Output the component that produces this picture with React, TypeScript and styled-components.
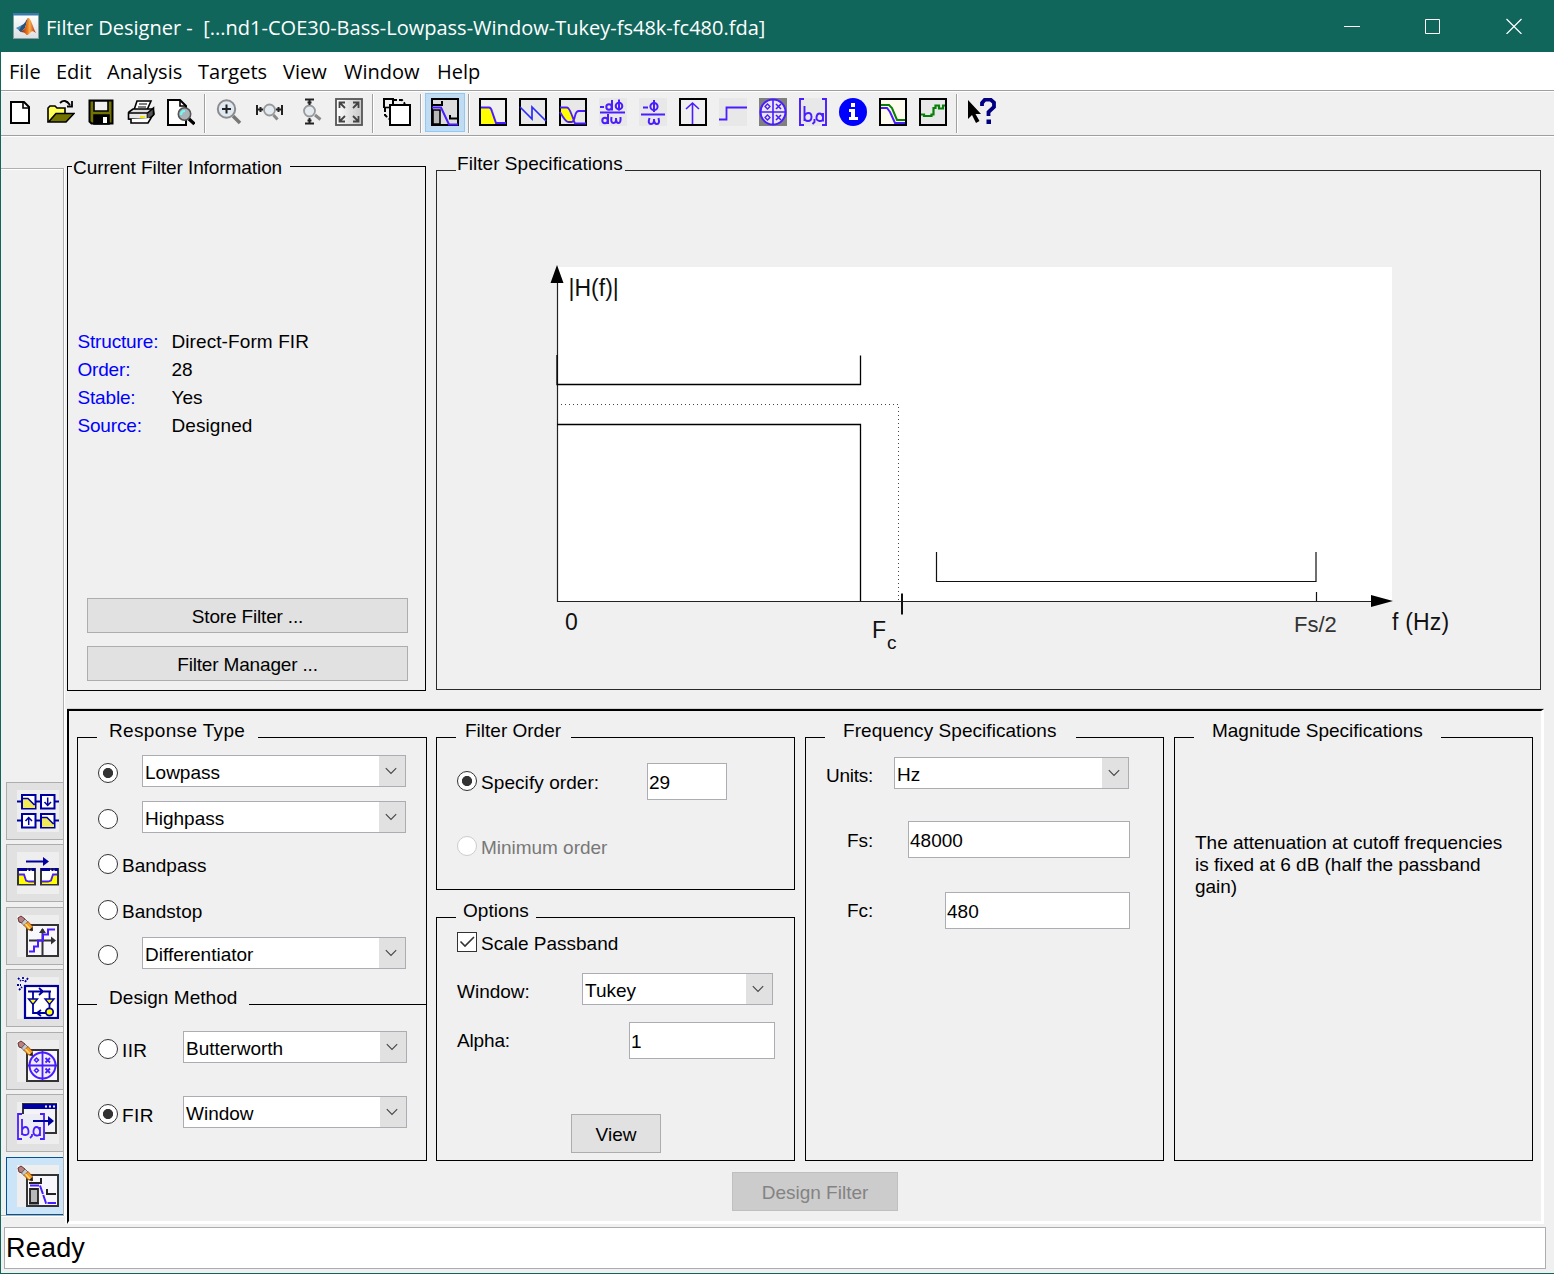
import React from 'react';
import styled, { createGlobalStyle, css } from 'styled-components';

const TEAL = '#11665c';
const FACE = '#f0f0f0';
const P = '#4a1cff';
const NAVY = '#0000a0';

const GlobalStyle = createGlobalStyle`
  *, *::before, *::after { box-sizing: border-box; }
  body { margin: 0; background: ${FACE}; }
`;

const Frame = styled.div`
  width: 1554px;
  height: 1274px;
  display: flex;
  flex-direction: column;
  border-left: 1px solid ${TEAL};
  border-bottom: 1px solid ${TEAL};
  background: ${FACE};
  color: #000;
  font: 19px/20px 'Liberation Sans', Arial, sans-serif;
  white-space: nowrap;
  overflow: hidden;
`;

const TitleBar = styled.header`
  height: 52px;
  flex: none;
  display: flex;
  align-items: center;
  padding-left: 12px;
  margin-left: -1px;
  background: ${TEAL};
  color: #fff;
  font: 20px/28px 'Open Sans', 'Segoe UI', sans-serif;
`;
const Title = styled.h1`
  flex: 1;
  margin: 0 0 0 6px;
  padding-top: 3px;
  font: inherit;
  letter-spacing: 0.01px;
  white-space: pre;
`;
const WindowControls = styled.div`
  display: flex;
  svg { display: block; }
`;
const Control = styled.button`
  width: 81px;
  height: 52px;
  padding: 0;
  border: 0;
  background: none;
  display: grid;
  place-items: center;
`;

const MenuBar = styled.nav`
  height: 38px;
  flex: none;
  display: flex;
  padding: 6px 0 0 8px;
  background: #fff;
  font: 20px/28px 'Open Sans', 'Segoe UI', sans-serif;
`;
const MenuItem = styled.span<{ $w: number }>`
  width: ${p => p.$w}px;
`;

const ToolBar = styled.div`
  height: 46px;
  flex: none;
  display: flex;
  align-items: flex-start;
  padding-top: 2px;
  border-top: 1px solid #a0a0a0;
  border-bottom: 1px solid #a0a0a0;
  box-shadow: inset 0 1px #fff;
`;
const ToolButton = styled.button<{ $active?: boolean }>`
  width: 40px;
  height: 39px;
  flex: none;
  display: flex;
  justify-content: center;
  align-items: flex-start;
  padding: 4px 0 0;
  border: 1px solid ${p => (p.$active ? '#90c8f6' : 'transparent')};
  background: ${p => (p.$active ? '#c0dcf3' : 'transparent')};
  svg { display: block; flex: none; }
`;
const Separator = styled.span`
  width: 2px;
  height: 39px;
  margin: 1px 3px 0;
  background: linear-gradient(90deg, #a0a0a0 50%, #fff 50%);
`;

const Body = styled.div`
  height: 1088px;
  flex: none;
  display: flex;
  border-top: 1px solid #fff;
`;
const SideBar = styled.aside`
  width: 63px;
  height: 1048px;
  margin-top: 31px;
  flex: none;
  display: flex;
  flex-direction: column;
  justify-content: flex-end;
  gap: 4.5px;
  padding: 0 0 0.2px 5px;
  border: solid #b0b0b0;
  border-width: 1px 1px 1px 0;
  box-shadow: 1px 0 #fff, inset 0 1px #fff, 0 1px #fff;
`;
const SideButton = styled.button<{ $active?: boolean }>`
  height: 58px;
  flex: none;
  display: flex;
  align-items: flex-start;
  padding: 7px 0 0 10px;
  border: 1px solid ${p => (p.$active ? '#005499' : '#adadad')};
  border-right: 0;
  background: ${p => (p.$active ? '#cce4f7' : '#e1e1e1')};
  svg { display: block; flex: none; }
`;

const Main = styled.main`
  flex: 1;
  padding: 19px 0 0 3px;
`;
const TopRow = styled.div`
  display: flex;
  align-items: flex-start;
  gap: 10px;
  margin-bottom: 19px;
  height: 534px;
`;

const Group = styled.fieldset<{ $h: number; $w?: number; $ink?: string }>`
  height: ${p => p.$h}px;
  width: ${p => (p.$w ? p.$w + 'px' : '100%')};
  min-width: 0;
  margin: 0;
  padding: 0;
  border: 1px solid ${p => p.$ink ?? '#000'};
`;
const Legend = styled.legend<{ $w: number; $inset?: number; $pad: number; $ls?: number }>`
  width: ${p => p.$w}px;
  margin-left: ${p => p.$inset ?? 19}px;
  padding: 0 0 13px ${p => p.$pad}px;
  line-height: 16px;
  letter-spacing: ${p => p.$ls ?? 0.05}px;
`;
const InfoGroup = styled(Group)`
  margin-top: 1px;
  ${Legend} { padding-top: 3px; padding-bottom: 0; }
`;

const InfoList = styled.dl`
  display: grid;
  grid-template-columns: 94px 1fr;
  grid-auto-rows: 28px;
  align-items: center;
  height: 112px;
  margin: 152px 0 158px 9.4px;
  dt { color: #0000ff; letter-spacing: -0.15px; }
  dd { margin: 0; letter-spacing: 0.1px; }
`;
const PushButton = styled.button<{ $w: number; $h: number; $disabled?: boolean }>`
  display: block;
  width: ${p => p.$w}px;
  height: ${p => p.$h}px;
  padding: 2px 0 0;
  border: 1px solid ${p => (p.$disabled ? '#bfbfbf' : '#adadad')};
  background: ${p => (p.$disabled ? '#cccccc' : '#e1e1e1')};
  color: ${p => (p.$disabled ? '#838383' : '#000')};
  font: inherit;
`;
const ButtonStack = styled.div`
  display: grid;
  gap: 13px;
  padding-left: 19px;
  letter-spacing: -0.2px;
  ${PushButton} { letter-spacing: -0.17px; }
`;

const DesignPanel = styled.section`
  width: 1477px;
  height: 515px;
  margin-top: 19px;
  padding: 12px 0 0 8px;
  border-style: solid;
  border-width: 2px 3px 3px 2px;
  border-color: #000 #fff #fff #000;
  box-shadow: -2px 0 #fafafa, 0 -1px #d4d4d4;
`;
const Columns = styled.div`
  display: flex;
  height: 438px;
`;
const Column = styled.div<{ $w: number; $gap: number }>`
  width: ${p => p.$w}px;
  margin-right: ${p => p.$gap}px;
  flex: none;
`;
const UpperGroup = styled(Group)`border-bottom: 0;`;
const JoinedGroup = styled(Group)`margin-top: -14px;`;
const OptionsGroup = styled(Group)`margin-top: 13px;`;

const Row = styled.div<{ $gap: number; $h: number; $left?: number }>`
  display: flex;
  align-items: flex-start;
  height: ${p => p.$h}px;
  margin-top: ${p => p.$gap}px;
  padding-left: ${p => p.$left ?? 20}px;
`;
const Label = styled.label<{ $w?: number; $top?: number; $muted?: boolean; $ls?: number }>`
  width: ${p => (p.$w ? p.$w + 'px' : 'auto')};
  padding-top: ${p => p.$top ?? 0}px;
  color: ${p => (p.$muted ? '#787878' : 'inherit')};
  letter-spacing: ${p => p.$ls ?? 0}px;
  flex: none;
`;
const RadioDot = styled.span<{ $on?: boolean; $top?: number; $muted?: boolean; $right: number }>`
  width: 20px;
  height: 20px;
  flex: none;
  margin: ${p => p.$top ?? 0}px ${p => p.$right}px 0 0;
  border: 1px solid ${p => (p.$muted ? '#cccccc' : '#333')};
  border-radius: 50%;
  background: #fff;
  ${p => p.$on && css`background: radial-gradient(circle, #333 4.7px, #fff 5.4px);`}
`;
const CheckBox = styled.span`
  width: 20px;
  height: 20px;
  margin-right: 4px;
  border: 1px solid #333;
  background: #fff;
  svg { display: block; }
`;
const Combo = styled.div<{ $w: number }>`
  width: ${p => p.$w}px;
  height: 32px;
  flex: none;
  display: flex;
  justify-content: space-between;
  padding-left: 2px;
  border: 1px solid #abadb3;
  background: #fff;
  line-height: 33px;
`;
const ComboArrow = styled.span`
  width: 26px;
  display: grid;
  place-items: center;
  padding-right: 2px;
  background: #e1e1e1;
  svg { display: block; margin-top: -1px; }
`;
const Field = styled.div<{ $w: number }>`
  width: ${p => p.$w}px;
  height: 37px;
  flex: none;
  padding-left: 1px;
  border: 1px solid #abadb3;
  background: #fff;
  line-height: 37px;
`;
const Note = styled.p`
  width: 320px;
  margin: 80px 0 0 20px;
  line-height: 22px;
  letter-spacing: -0.02px;
  white-space: pre-line;
`;
const ActionRow = styled.div`padding: 11px 0 0 655px;`;
const ViewRow = styled.div`padding: 55px 0 0 134px;`;

const StatusBar = styled.footer`
  width: 1542px;
  height: 42px;
  margin: 3px 0 0 3px;
  padding-left: 1px;
  border: 1px solid #abadb3;
  background: #fff;
  font-size: 27px;
  line-height: 41px;
  letter-spacing: 0.2px;
`;

/* ---------- small widgets ---------- */

const Select = ({ w, children }: { w: number; children: React.ReactNode }) => (
  <Combo $w={w}>
    <span>{children}</span>
    <ComboArrow>
      <svg width="12" height="8" viewBox="0 0 12 8" fill="none" stroke="#444" strokeWidth="1.1"><path d="M.8 1.2 6 6.4l5.200-5.200" /></svg>
    </ComboArrow>
  </Combo>
);

const Icon = ({ children }: { children: React.ReactNode }) => (
  <svg width="28" height="28" viewBox="0 0 28 28" fill="none" stroke="#000" strokeWidth="1.6">{children}</svg>
);
const Box = ({ fill = '#e8e8e8' }: { fill?: string }) => <rect x="1" y="1" width="26" height="26" fill={fill} stroke="#000" strokeWidth="2" />;

const MatlabLogo = () => (
  <svg width="28" height="28" viewBox="0 0 28 28">
    <defs>
      <linearGradient id="peak" x1="0" x2="1"><stop offset="0" stopColor="#7a1d10" /><stop offset=".45" stopColor="#f0781e" /><stop offset=".6" stopColor="#f7b04a" /><stop offset="1" stopColor="#b5200f" /></linearGradient>
      <linearGradient id="plate" y2="1" x2="0"><stop offset="0" stopColor="#fff" /><stop offset="1" stopColor="#dcdfe3" /></linearGradient>
    </defs>
    <rect x="1.500" y="1.500" width="25" height="25" fill="url(#plate)" stroke="#8d9aa5" />
    <path d="M1 1h26v2.500H1z" fill="#3d78ad" />
    <path d="M4 16l6-3 3 2.500-4 4.500z" fill="#4a90c4" />
    <path d="M10 13c3-1 4-5 6-7l-3 10-4 4-2-1.500z" fill="#29527a" />
    <path d="M8.500 20c2-1 2.500-2 4-3 2-3 2-11 4-11 2.500 0 4.500 10 7.500 15-3-2-4-2.500-6 0-1.500 1.500-2 2-3.500 2-1-2-3-3-6-3z" fill="url(#peak)" />
  </svg>
);

const toolbar: React.ReactNode[][] = [
  [
    <Icon key="new"><path d="M4 4h13l5 5v16H4z" fill="#fff" strokeWidth="2" /><path d="M16 4v6h6" /></Icon>,
    <Icon key="open">
      <path d="M1 24V10l2-2h5l2 2h8v5" fill="#ffff55" />
      <path d="M1.500 24 9 15.500h18L19 24z" fill="#737300" />
      <path d="M13 5q5-5 10 2M25 3v5.500h-5" strokeWidth="1.800" />
    </Icon>,
    <Icon key="save">
      <path d="M2.500 2.500h23v23h-21l-2-2z" fill="#737300" strokeWidth="2" />
      <path d="M7 3h14v10H7z" fill="#f0f0f0" /><path d="M7 17h15v9H7z" fill="#000" /><path d="M16 19h4v6h-4z" fill="#fff" stroke="none" />
    </Icon>,
    <Icon key="print">
      <path d="M7 12 10 3h14l-4 9z" fill="#fff" /><path d="M12 6h8M11 9h8" strokeWidth="1.200" />
      <path d="M2 14l4-3h20l1 5-4 5H2z" fill="#ddd" /><path d="M1.500 15h19v6h-19z" fill="#e8e8e8" /><path d="M20.500 15l6-5v7l-6 5" fill="#555" />
      <path d="M4 21v4h17l3-5" fill="#fff" /><path d="M13 19h5" stroke="#f5e900" strokeWidth="2" />
    </Icon>,
    <Icon key="preview">
      <path d="M1 2h12l6 6v19H1z" fill="#fff" strokeWidth="2" /><path d="M13 2v6h6" />
      <circle cx="17.500" cy="16" r="6.200" fill="#aab4b8" stroke="#555" /><path d="M14 17q0-4 4-4" stroke="#6ff" strokeWidth="2" /><path d="m22 21 5.500 5" strokeWidth="3.400" />
    </Icon>,
  ],
  [
    <Icon key="zoom">
      <path d="m18 18 7 7" stroke="#777" strokeWidth="3.600" /><circle cx="11.500" cy="11" r="8.700" fill="#dfe9f2" stroke="#8c8c8c" strokeWidth="2" /><path d="M7 11h9M11.500 6.500v9" stroke="#222" strokeWidth="2" />
    </Icon>,
    <Icon key="zoomx">
      <path d="m18.500 17 4 4.500" stroke="#888" strokeWidth="3" /><circle cx="14.500" cy="12" r="5.500" fill="#e3eaf0" stroke="#999" strokeWidth="1.800" />
      <path d="M2 7v10M27 7v10M3 11.500h5M21 11.500h5M5.500 9v5M23.500 9v5" stroke="#222" strokeWidth="2" />
    </Icon>,
    <Icon key="zoomy">
      <path d="m20 17 5.500 4.500" stroke="#888" strokeWidth="3" /><circle cx="14.500" cy="13" r="5.500" fill="#e3eaf0" stroke="#999" strokeWidth="1.800" />
      <path d="M10 1.500h9M10 25.500h9M14.500 2v5M14.500 20v5M12.500 4.500h4M12.500 22.500h4" stroke="#222" strokeWidth="2" />
    </Icon>,
    <Icon key="full">
      <defs><linearGradient id="fs"><stop offset="0" stopColor="#fff" /><stop offset="1" stopColor="#c8c8c8" /></linearGradient></defs>
      <rect x="1" y="1" width="26" height="26" fill="url(#fs)" stroke="#555" strokeWidth="1.800" />
      <path d="M4.500 10V4.500H10M5 5l5 5M18 4.500h5.500V10M23 5l-5 5M4.500 18v5.500H10M5 23l5-5M18 23.500h5.500V18M23 23l-5-5" stroke="#444" strokeWidth="1.800" />
    </Icon>,
  ],
  [
    <Icon key="copy"><path d="M1 10V1h9v5" strokeWidth="2" /><path d="M10 2h9l3 4M2 10v7l4 4" strokeDasharray="4 2" strokeWidth="2" /><path d="M1.500 9.500h5" /><rect x="7" y="7" width="20" height="20" fill="#fff" strokeWidth="2" /></Icon>,
  ],
  [
    <Icon key="design"><Box fill="#dcdcdc" /><path d="M2 12h7v14H2z" fill="#b8b8b8" /><path d="M2 7h9V3" strokeWidth="2" /><path d="M19 17v3.500h7" strokeWidth="2" /><path d="M1 9.500h9l8 17h9" stroke={P} strokeWidth="2" /></Icon>,
  ],
  [
    <Icon key="mag"><Box fill="#f0f0f0" /><path d="M2 9h8l7 17H2z" fill="#ff0" stroke="none" /><path d="M2 9.500h8q2 0 3 4l4 11.500h10" stroke={P} strokeWidth="2" /></Icon>,
    <Icon key="phase"><Box /><path d="m1 9 12 12V9l14 14" stroke="#2a2aff" strokeWidth="1.700" /></Icon>,
    <Icon key="both"><Box /><path d="M2 9h8l7 15H7L2 15z" fill="#ff0" stroke="none" /><path d="M1 9.500h7q2 0 5 8l3 8h11M1 14q5 9 8 10h4q2-1 3-6 1-5 4-5h6" stroke={P} strokeWidth="1.800" /></Icon>,
    <Icon key="group">
      <path d="M0 0h28v28H0z" fill="#e8e8e8" stroke="none" />
      <g stroke={P} strokeWidth="2"><path d="M1 9h4M1 14.500h25" /><circle cx="10" cy="9" r="2.700" /><path d="M13 2v10.500" /><circle cx="20" cy="8" r="3.300" /><path d="M20 1.500v11" /><circle cx="6" cy="22.500" r="2.700" /><path d="M9 16v10M12.500 19q-1 6 2 6t2.500-5q0 5 2.500 5t2-6" /></g>
    </Icon>,
    <Icon key="delay">
      <path d="M0 0h28v28H0z" fill="#e8e8e8" stroke="none" />
      <g stroke={P} strokeWidth="2"><path d="M4 9.500h5M2 16.500h24" /><circle cx="15" cy="8.500" r="3.600" /><path d="M15 2v12M10.500 20q-2 6 1.500 6t3-5q0 5 3 5t1.500-6" /></g>
    </Icon>,
    <Icon key="impulse"><Box fill="#f0f0f0" /><path d="M13.500 5v21M7 11l6.500-6 6.500 6" stroke={P} /></Icon>,
    <Icon key="step"><path d="M0 0h28v28H0z" fill="#e8e8e8" stroke="none" /><path d="M0 21.500h7.500v-12H28" stroke={P} strokeWidth="1.800" /></Icon>,
    <Icon key="pz"><path d="M0 0h28v28H0z" fill="#808080" stroke="none" /><circle cx="14" cy="14" r="12.500" fill="#e8e8e8" stroke={P} strokeWidth="2" /><path d="M14 1v26M1 14h26M17 6l5 5M22 6l-5 5M17 17l5 5M22 17l-5 5" stroke={P} /><path d="m8.500 6 2.500 2.500L8.500 11 6 8.500zM8.500 17l2.500 2.500L8.500 22 6 19.500z" stroke={P} strokeWidth="1.300" /></Icon>,
    <Icon key="coeff"><path d="M0 0h28v28H0z" fill="#e8e8e8" stroke="none" /><path d="M5 1H1v26h4M23 1h4v26h-4M5.500 8v15M5.500 18q1-3 4-3t3 4-3.500 4-3.500-3M15.500 21v3l-2 2M24 15v8.500M24 19q-1-3.500-3.500-3.500t-3 3.500 3 4 3.500-3" stroke={P} strokeWidth="1.900" /></Icon>,
    <Icon key="info"><circle cx="14" cy="14" r="14" fill="#00f" stroke="none" /><path d="M12 5h4v4h-4zM10 11h6v8h3v3h-9v-3h2v-5h-2z" fill="#fff" stroke="none" /></Icon>,
    <Icon key="spec"><Box fill="#fffbee" /><path d="M2 7h8l3 3 5 12h8" stroke="#078007" strokeWidth="2" /><path d="M2 10h6l3 4 5 11h10" stroke={P} strokeWidth="2" /></Icon>,
    <Icon key="noise"><Box /><path d="M2 16.500h3v1.500h7.500v-1.500h2V10h2V7.500h3.500v3h4v-3h2" stroke="#078007" strokeWidth="2.200" /></Icon>,
  ],
  [
    <svg key="help" width="30" height="28" viewBox="0 0 30 28"><path d="M2 2v19l4-4 4 8 3.500-2-4-7H15z" fill="#000" /><path d="M16 8V5l3-3.500h5.500l3.500 3v4.500l-5.500 5v4" fill="none" stroke="#000080" strokeWidth="3.800" /><path d="M20.500 21.500h4.500V26h-4.500z" fill="#000080" /></svg>,
  ],
];

const SideIcon = ({ children }: { children: React.ReactNode }) => (
  <svg width="42" height="42" viewBox="0 0 42 42" fill="none" stroke={NAVY} strokeWidth="1.800">
    <path d="M0 0h42v42H0z" fill="#eeeeee" stroke="none" />{children}
  </svg>
);
const Pencil = () => (
  <g stroke="none">
    <path d="m1 3 3-2 4 3-3 4-3-1z" fill="#b98080" stroke="#633" strokeWidth="1" />
    <path d="m4.500 8 3.500-4 3 3-3.500 4z" fill="#c8c8d0" stroke="#555" strokeWidth=".8" />
    <path d="m7 10.500 4-4 4.500 5-.5 4.500-4-1.500z" fill="#f59a23" stroke="#a04a10" strokeWidth=".8" />
    <path d="m8.500 9 5 5.500" stroke="#ffe070" strokeWidth="1.200" />
    <path d="m12 15 3.500-3 .5 4z" fill="#222" />
  </g>
);
const Sheet = () => <rect x="10" y="10" width="31" height="31" fill="#f8f8fc" stroke="#333" strokeWidth="2" />;

const sideIcons: React.ReactNode[] = [
  <SideIcon key="multirate">
    <path d="M0 11.500h42M0 30.500h42" />
    {[[5, 5], [24, 5], [5, 24], [24, 24]].map(([x, y]) => <rect key={`${x}-${y}`} x={x} y={y} width="13.500" height="13.500" fill="#fff" strokeWidth="2" />)}
    <path d="M6 9h5l7 6v3H6zM25 28h5l7 6v3H25z" fill="#f3ea5a" stroke="none" />
    <path d="M5 8.500h6l6 6h2M24 27.500h6l6 6h2M30.700 7.500v7M27.500 12l3.200 3.500L34 12M11.700 35v-7M8.500 31l3.200-3.500L15 31" strokeWidth="1.500" />
  </SideIcon>,
  <SideIcon key="transform">
    <path d="M9 9.500h18" strokeWidth="2" /><path d="M26 5v9l6-4.500z" fill={NAVY} stroke="none" />
    <path d="M1 17h17v15.500H1zM24 17h17v15.500H24z" fill="#fff" stroke="#333" strokeWidth="2" />
    <path d="M2 23h5l3 6 7 1v2H2zM40 23h-5l-3 6-7 1v2h15z" fill="#ff0" stroke="none" />
    <path d="M2 22.500h5l2 6 3 1h5M40 22.500h-4l-2 6-3 1h-6" stroke={P} /><path d="M1 17.500h17M24 17.500h17" strokeWidth="3" strokeDasharray="9 1.500 2 1" />
  </SideIcon>,
  <SideIcon key="quantize"><Sheet /><path d="M12 25.500h24M25.500 14v26" stroke="#333" strokeWidth="2" /><path d="M34 21.500v8l5-4zM22 18l3.500-5 3.500 5z" fill="#333" stroke="none" /><path d="M12 36.500h5v-5h4v-6h5v-6h5v-5h7" stroke={P} strokeWidth="2" /><Pencil /></SideIcon>,
  <SideIcon key="realize">
    <rect x="8" y="9" width="33" height="32" fill="#fff" strokeWidth="2.200" /><path d="M0 8h4M1 1l3 3M6 0v4M11 1 8 5M2 13l3-3" strokeDasharray="2 1" />
    <path d="M11 14.500h23M16 14v22h17M32.500 14v22M22 11l4 3.500-4 3.500M24 33l-4 3 4 3" /><path d="M11.500 22h9L16 27.500zM28 22h9l-4.500 5.500z" fill="#ff0" strokeWidth="1.400" /><circle cx="32.500" cy="35" r="3.700" fill="#ff0" />
  </SideIcon>,
  <SideIcon key="pzedit"><Sheet /><circle cx="25.500" cy="25.500" r="13" fill="#f0f0f8" stroke={P} strokeWidth="2" /><path d="M25.500 11v29M11 25.500h29M28.500 18l4.500 4.500M33 18l-4.500 4.500M28.500 28.500 33 33M33 28.500 28.500 33" stroke={P} /><path d="m19.500 18 2 2-2 2-2-2zM19.500 28.500l2 2-2 2-2-2z" stroke={P} strokeWidth="1.500" /><Pencil /></SideIcon>,
  <SideIcon key="import">
    <rect x="6" y="2" width="33" height="29" fill="#f4f4f8" stroke="#333" strokeWidth="2" /><path d="M6 4.500h34" strokeWidth="5" /><path d="M28 4.500h10" stroke="#eee" strokeDasharray="2 2" />
    <path d="M1 12h27v25H1z" fill="#ececf4" stroke="none" /><path d="M5 12H1v25h4M23 12h4v25h-4M5 17v16M5 28q1-3 3.500-3t3 4-3.200 4-3.300-3M15 32v2l-2 2M23 25v9M23 29q-1-4-3.500-4t-3 4 3 4.500 3.500-3.500" stroke={P} />
    <path d="M16 19h16" strokeWidth="2" /><path d="M31 14v10l6-5z" fill={NAVY} stroke="none" />
  </SideIcon>,
  <SideIcon key="design"><Sheet /><path d="M13 24h8v14h-8z" fill="#b8b8b8" stroke="#222" /><path d="M12 18h12v-5M30 24v5h9M12 38.500h10" stroke="#222" strokeWidth="2" /><path d="M13 20.500h10l6 17.500h10" stroke={P} strokeWidth="2" strokeDasharray="9 1" /><Pencil /></SideIcon>,
];

const SpecChart = () => (
  <svg width="1103" height="480" viewBox="437 185 1103 480" fill="none" stroke="#222" strokeWidth="1.200" fontFamily="'Liberation Sans', Arial, sans-serif" fontSize="23">
    <rect x="557" y="267" width="835" height="334" fill="#fff" stroke="none" />
    <path d="M557.500 270v331.500H1380" />
    <path d="M557 265l6.500 18h-13zM1393 601l-22 6v-12z" fill="#000" stroke="none" />
    <path d="M557 355v29.500h303.500V355.500M557 424.500h303.500V601" stroke="#000" strokeWidth="1.300" />
    <path d="M936.500 552v29.500H1316V552M1316.500 592v9" stroke="#111" />
    <path d="M561 404.500h338" stroke="#444" strokeWidth="1" strokeDasharray="1 3" />
    <path d="M898.500 407v194" stroke="#444" strokeWidth="1" strokeDasharray="1 3" />
    <path d="M902 593.500v21" stroke="#111" strokeWidth="2" />
    <g fill="#111" stroke="none">
      <text x="568.500" y="296">|H(f)|</text>
      <text x="565" y="630">0</text>
      <text x="872" y="638">F</text>
      <text x="887" y="649" fontSize="19">c</text>
      <text x="1294" y="632" fontSize="22" fill="#333">Fs/2</text>
      <text x="1392" y="630" letterSpacing="0.2">f (Hz)</text>
    </g>
  </svg>
);

export default function App() {
  return (
    <>
      <GlobalStyle />
      <Frame>
        <TitleBar>
          <MatlabLogo />
          <Title>{'Filter Designer -  [...nd1-COE30-Bass-Lowpass-Window-Tukey-fs48k-fc480.fda]'}</Title>
          <WindowControls>
            <Control aria-label="Minimize"><svg width="16" height="16" stroke="#fff"><path d="M0 8.500h16" /></svg></Control>
            <Control aria-label="Maximize"><svg width="16" height="16" stroke="#fff" fill="none"><path d="M.5 1.500h14v14H.5z" /></svg></Control>
            <Control aria-label="Close"><svg width="16" height="16" stroke="#fff" strokeWidth="1.200"><path d="m.5 1 15 15m0-15-15 15" /></svg></Control>
          </WindowControls>
        </TitleBar>

        <MenuBar>
          <MenuItem $w={47}>File</MenuItem>
          <MenuItem $w={51}>Edit</MenuItem>
          <MenuItem $w={91}>Analysis</MenuItem>
          <MenuItem $w={85}>Targets</MenuItem>
          <MenuItem $w={61}>View</MenuItem>
          <MenuItem $w={93}>Window</MenuItem>
          <MenuItem $w={50}>Help</MenuItem>
        </MenuBar>

        <ToolBar>
          {toolbar.map((group, g) => (
            <React.Fragment key={g}>
              {g > 0 && <Separator />}
              {group.map((icon, i) => <ToolButton key={i} $active={g === 3}>{icon}</ToolButton>)}
            </React.Fragment>
          ))}
        </ToolBar>

        <Body>
          <SideBar>
            {sideIcons.map((icon, i) => <SideButton key={i} $active={i === 6}>{icon}</SideButton>)}
          </SideBar>

          <Main>
            <TopRow>
              <InfoGroup $h={534} $w={359}>
                <Legend $w={218} $inset={4} $pad={1} $ls={-0.08}>Current Filter Information</Legend>
                <InfoList>
                  <dt>Structure:</dt><dd>Direct-Form FIR</dd>
                  <dt>Order:</dt><dd>28</dd>
                  <dt>Stable:</dt><dd>Yes</dd>
                  <dt>Source:</dt><dd>Designed</dd>
                </InfoList>
                <ButtonStack>
                  <PushButton $w={321} $h={35}>Store Filter ...</PushButton>
                  <PushButton $w={321} $h={35}>Filter Manager ...</PushButton>
                </ButtonStack>
              </InfoGroup>
              <Group $h={534} $w={1105} $ink="#2a2a2a">
                <Legend $w={169} $pad={1}>Filter Specifications</Legend>
                <SpecChart />
              </Group>
            </TopRow>

            <DesignPanel>
              <Columns>
                <Column $w={350} $gap={9}>
                  <UpperGroup $h={281}>
                    <Legend $w={161} $pad={12} $ls={0.35}>Response Type</Legend>
                    <Row $gap={3} $h={32}><RadioDot $on $top={8} $right={24} /><Select w={264}>Lowpass</Select></Row>
                    <Row $gap={14} $h={32}><RadioDot $top={8} $right={24} /><Select w={264}>Highpass</Select></Row>
                    <Row $gap={21} $h={20}><RadioDot $right={4} /><Label $top={2}>Bandpass</Label></Row>
                    <Row $gap={26} $h={20}><RadioDot $right={4} /><Label $top={2}>Bandstop</Label></Row>
                    <Row $gap={17} $h={32}><RadioDot $top={8} $right={24} /><Select w={264}>Differentiator</Select></Row>
                  </UpperGroup>
                  <JoinedGroup $h={171}>
                    <Legend $w={152} $pad={12}>Design Method</Legend>
                    <Row $gap={12} $h={32}><RadioDot $top={8} $right={4} /><Label $top={10} $w={61} $ls={0.4}>IIR</Label><Select w={224}>Butterworth</Select></Row>
                    <Row $gap={33} $h={32}><RadioDot $on $top={8} $right={4} /><Label $top={10} $w={61} $ls={0.4}>FIR</Label><Select w={224}>Window</Select></Row>
                  </JoinedGroup>
                </Column>

                <Column $w={359} $gap={10}>
                  <Group $h={167}>
                    <Legend $w={115} $pad={9} $ls={0}>Filter Order</Legend>
                    <Row $gap={11} $h={37}><RadioDot $on $top={8} $right={4} /><Label $top={10} $w={166} $ls={0.07}>Specify order:</Label><Field $w={80}>29</Field></Row>
                    <Row $gap={36} $h={20}><RadioDot $muted $right={4} /><Label $top={2} $muted $ls={-0.03}>Minimum order</Label></Row>
                  </Group>
                  <OptionsGroup $h={258}>
                    <Legend $w={80} $pad={7}>Options</Legend>
                    <Row $gap={0} $h={20}>
                      <CheckBox><svg width="18" height="18" viewBox="0 0 18 18" fill="none" stroke="#333" strokeWidth="1.600"><path d="m2.500 8.500 4.500 4.500 9-9" /></svg></CheckBox>
                      <Label $top={2}>Scale Passband</Label>
                    </Row>
                    <Row $gap={21} $h={32}><Label $w={125} $top={9}>Window:</Label><Select w={191}>Tukey</Select></Row>
                    <Row $gap={17} $h={37}><Label $w={172} $top={9} $ls={-0.15}>Alpha:</Label><Field $w={146}>1</Field></Row>
                    <ViewRow><PushButton $w={90} $h={39}>View</PushButton></ViewRow>
                  </OptionsGroup>
                </Column>

                <Column $w={359} $gap={10}>
                  <Group $h={438}>
                    <Legend $w={251} $pad={18}>Frequency Specifications</Legend>
                    <Row $gap={5} $h={32}><Label $w={68} $top={9} $ls={-0.25}>Units:</Label><Select w={235}>Hz</Select></Row>
                    <Row $gap={32} $h={37} $left={41}><Label $w={61} $top={10}>Fs:</Label><Field $w={222}>48000</Field></Row>
                    <Row $gap={34} $h={37} $left={41}><Label $w={98} $top={9}>Fc:</Label><Field $w={185}>480</Field></Row>
                  </Group>
                </Column>

                <Column $w={359} $gap={0}>
                  <Group $h={438}>
                    <Legend $w={247} $pad={18} $ls={-0.02}>Magnitude Specifications</Legend>
                    <Note>{'The attenuation at cutoff frequencies\nis fixed at 6 dB (half the passband\ngain)'}</Note>
                  </Group>
                </Column>
              </Columns>
              <ActionRow><PushButton $w={166} $h={39} $disabled>Design Filter</PushButton></ActionRow>
            </DesignPanel>
          </Main>
        </Body>

        <StatusBar>Ready</StatusBar>
      </Frame>
    </>
  );
}
